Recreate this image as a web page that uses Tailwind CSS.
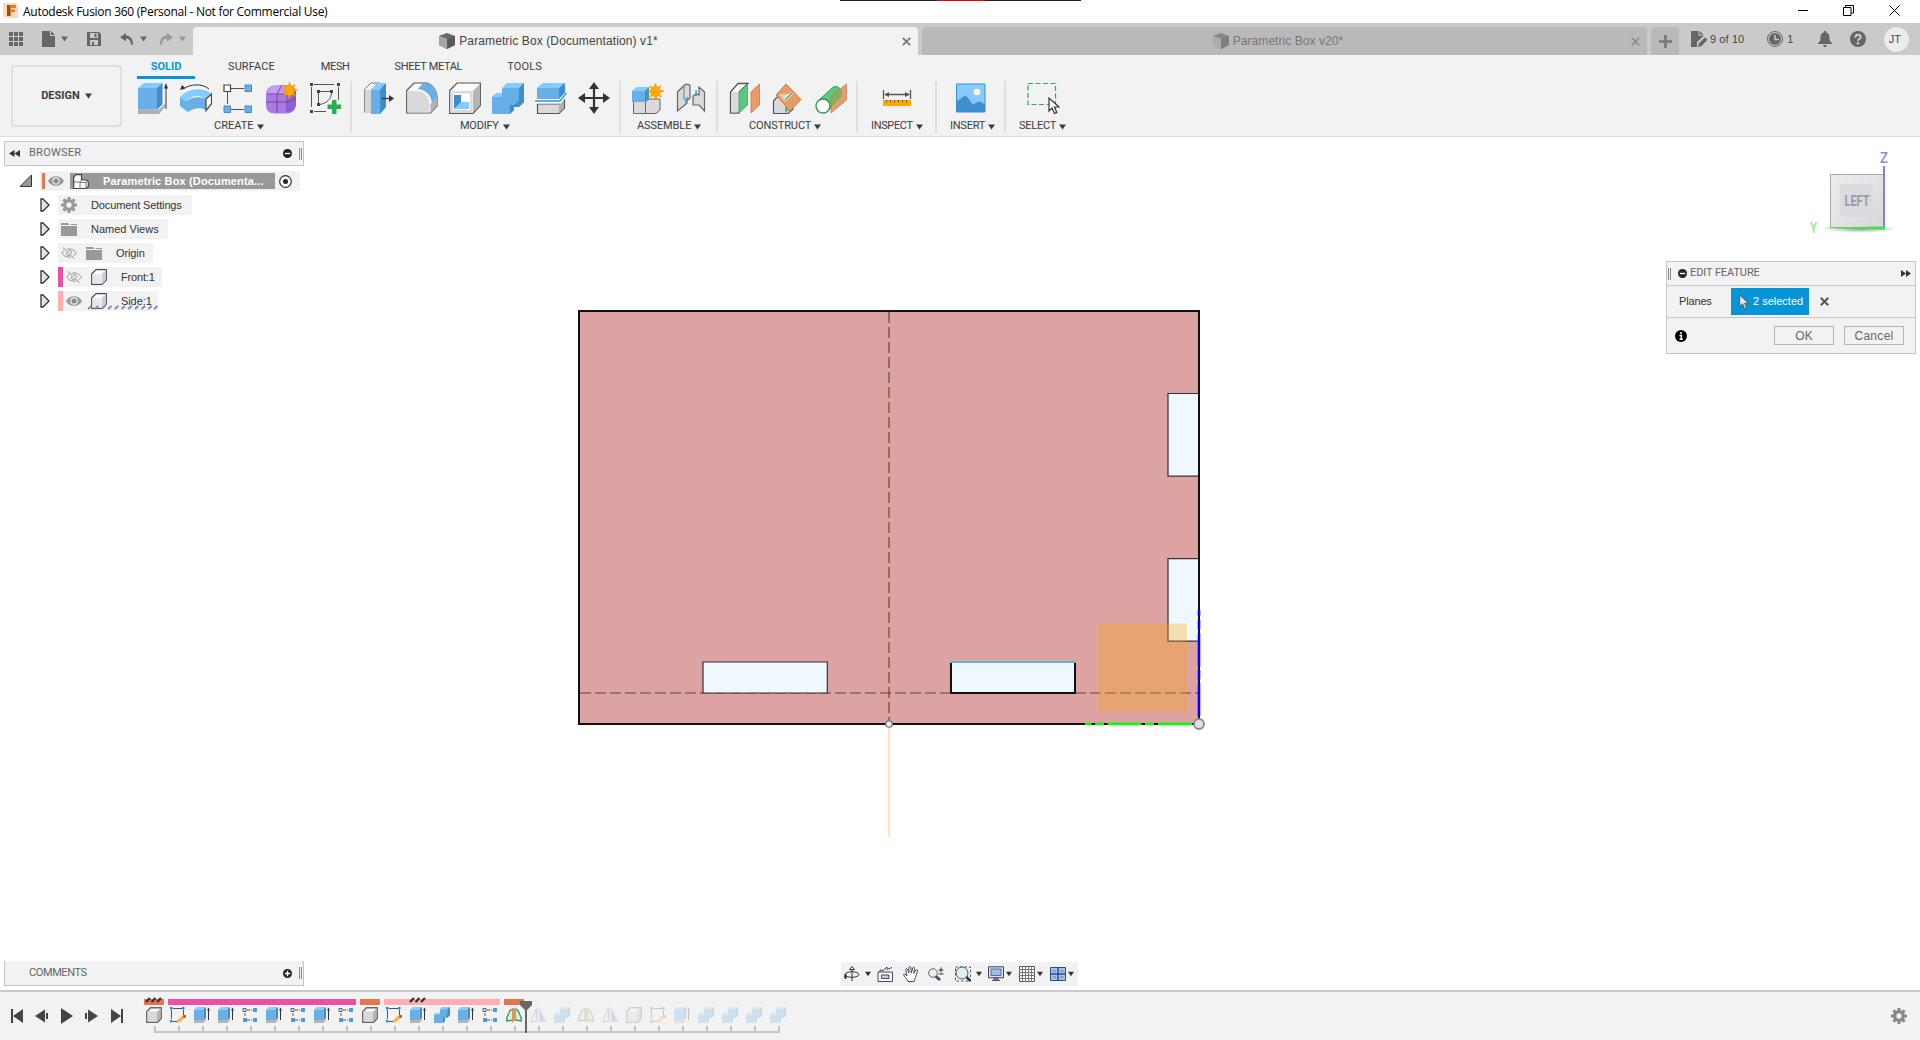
<!DOCTYPE html>
<html lang="en">
<head>
<meta charset="utf-8">
<title>Autodesk Fusion 360 (Personal - Not for Commercial Use)</title>
<script src="https://cdn.jsdelivr.net/npm/@tailwindcss/browser@4"></script>
</head>
<body class="w-[1920px] h-[1040px] overflow-hidden bg-white font-['Liberation_Sans',sans-serif] text-[#3c3c3c]">

<svg class="hidden">
  <defs>
    <symbol id="caret" viewBox="0 0 7 6"><path d="M0 .5h7L3.500 5.500z" fill="currentColor"/></symbol>
    <symbol id="cube" viewBox="0 0 16 16"><path d="M8 0 16 3v9l-8 4-8-4V3z" fill="#666"/><path d="M0 3l8 2.500V16l-8-4z" fill="#a5a5a5"/><path d="M8 5.500 16 3v9l-8 4z" fill="#5a5a5a"/></symbol>
    <symbol id="eye" viewBox="0 0 16 12"><path d="M0 6C3-.5 13-.5 16 6 13 12.500 3 12.500 0 6z" fill="#9a9a9a"/><circle cx="8" cy="6" r="3.700" fill="#f2f2f2"/><circle cx="8" cy="6" r="2.600" fill="#8c8c8c"/></symbol>
    <symbol id="eyeoff" viewBox="0 0 16 12"><path d="M.7 6C4 .5 12 .5 15.300 6 12 11.500 4 11.500.7 6z" fill="none" stroke="#999"/><circle cx="8" cy="6" r="2.700" fill="none" stroke="#999"/><path d="M2.500.5l11 11" stroke="#f2f2f2" stroke-width="2.500"/><path d="M2 .5l11.500 11.300" stroke="#888" stroke-width="1"/></symbol>
    <symbol id="folder" viewBox="0 0 16 13"><path d="M0 0h7l1.500 2H0zM9.500 1H16v1H10z" fill="#999"/><path d="M0 3h16v10H0z" fill="#999"/></symbol>
    <symbol id="body" viewBox="0 0 16 16"><path d="M.7 5 5 .7h10.300V11L11 15.300H.7z" fill="#fdfdfd" stroke="#444b55" stroke-width="1.200" stroke-linejoin="round"/><path d="M1.500 5.500h9v9h-9z" fill="#e4e6ea"/><path d="M11 5l4-4v10l-4 4z" fill="#c9ccd2"/></symbol>
    <symbol id="tri" viewBox="0 0 10 14"><path d="M1 1h2l6 6-6 6H1z" fill="#e4e4e4" stroke="#333" stroke-width="1.300"/></symbol>
    <symbol id="gear" viewBox="-8 -8 16 16"><circle r="4.300" fill="none" stroke="currentColor" stroke-width="3.200"/><g stroke="currentColor" stroke-width="3"><path d="M0-8v3M0 5v3M-8 0h3M5 0h3M-5.600-5.600l2 2M3.600 3.600l2 2M-5.600 5.600l2-2M3.600-3.600l2-2"/></g></symbol>
    <symbol id="t-ext" viewBox="0 0 16 16"><path d="M0 13h10l2-2v2l-2.500 3H0z" fill="#b5b5b5"/><path d="M0 2.500h9.500V13H0z" fill="#67afe6"/><path d="M0 2.500 3 0h9L9.500 2.500z" fill="#84cbff"/><path d="M9.500 2.500 12 0v10.500L9.500 13z" fill="#3d8ecb"/><path d="M14.500 2v11" stroke="#333"/><path d="M13 3.500 14.500.5 16 3.500z" fill="#333"/></symbol>
    <symbol id="t-sk" viewBox="0 0 16 16"><path d="M3 1.500h9M1.500 3v9M13.500 3v5M3 14.500h5" stroke="#555" stroke-width="1"/><path d="M0 0h2.500v2.500H0zM12 0h2.500v2.500H12zM0 13h2.500v2.500H0z" fill="#1e88e5"/><path d="M7.500 13l5-4.500 2.500 2-5 4.500-3 .8z" fill="#fbb731"/><circle cx="14.500" cy="9.300" r="1.600" fill="#f0423c"/></symbol>
    <symbol id="t-pat" viewBox="0 0 16 16"><path d="M5 3h5M3 6v4M5 13h5" stroke="#555" stroke-dasharray="3 1"/><path d="M1 1.500h3v3H1z" fill="#fff" stroke="#555"/><path d="M11 1h4v4h-4zM1 11h4v4H1zM11 11h4v4h-4z" fill="#4f9bd6"/></symbol>
    <symbol id="t-box" viewBox="0 0 16 16"><path d="M.8 4.500 4.500.8h10.700v10.700l-3.700 3.700H.8z" fill="#fafafa" stroke="#666" stroke-width="1.500" stroke-linejoin="round"/><path d="M1.500 4.500H11v10H1.500z" fill="#d9d9d9"/><path d="M11 4.500l3.500-3v9.700L11 14.500z" fill="#b5b5b5"/></symbol>
    <symbol id="t-com" viewBox="0 0 16 16"><path d="M0 8l2-2h4V2.500L8 0h8v8l-2.500 2.500H11V14l-2 2H0z" fill="#67afe6"/><path d="M6 2.500 8 0h8l-2.500 2.500zM0 8l2-2h4v2z" fill="#84cbff"/><path d="M13.500 2.500 16 0v8l-2.500 2.500H11V14l-2 2v-5.500h2L13.500 8z" fill="#3d8ecb"/></symbol>
    <symbol id="t-pl" viewBox="0 0 16 16"><path d="M.8 11 4 3.500 7 2v11l-6.200 1zM15.200 11 12 3.500 9.500 2v11l5.700 1z" fill="#dff1e4" stroke="#2f9a55" stroke-width="1.300"/><path d="M6 3.500 10 0v12.500L6 16z" fill="#e8925c"/></symbol>
    <symbol id="t-mir" viewBox="0 0 16 16"><path d="M6.300 1.500v13H.8z" fill="#fff" stroke="#777"/><path d="M8 0v16" stroke="#e8925c" stroke-dasharray="2 1"/><path d="M9.500 1v14h6.300z" fill="#4f9bd6"/></symbol>
    <symbol id="star" viewBox="-9 -9 18 18"><path d="M0-9 1.800-4 6-6.500 4-2 9-0.500 4.200 1.500 6.500 6 2 4.200 0 9-1.800 4.200-6.500 6.500-4.200 1.800-9 0-4.200-1.800-6.300-6-2-4.200z" fill="#ffa800" stroke="#d98500" stroke-width=".4"/></symbol>
  </defs>
</svg>

<!-- Title bar -->
<header class="relative flex h-[23px] items-center bg-white pl-[3px] pr-[20px]">
  <svg class="-mt-0.5 size-[15px]" viewBox="0 0 15 15"><path d="M0 0h13l2 2v13H2l-2-2z" fill="#fbd9bd"/><path d="M4 2h9v3H8v1.500h4v2.500H8v4H4z" fill="#e07b2c"/><path d="M4 2h3v11H4z" fill="#a8481a"/></svg>
  <h1 class="ml-[5px] font-['Open_Sans',sans-serif] text-[12px] tracking-[-0.28px] whitespace-nowrap text-black">Autodesk Fusion 360 (Personal - Not for Commercial Use)</h1>
  <div class="absolute left-[840px] top-0 flex h-px w-[241px] justify-center bg-[#222]"><i class="h-px w-12 bg-red-600"></i></div>
  <div class="-mt-[3px] ml-auto flex items-center gap-[35px] text-black">
    <svg class="h-[11px] w-[10px]" viewBox="0 0 10 11"><path d="M0 5.500h10" stroke="currentColor"/></svg>
    <svg class="size-[11px]" viewBox="0 0 11 11" fill="none" stroke="currentColor"><path d="M.5 2.500h7.500v8H.5zM2.500 2V.5h8v7.500H8.500"/></svg>
    <svg class="size-[11px]" viewBox="0 0 11 11" stroke="currentColor"><path d="M.5.5l10 10M10.500.5l-10 10"/></svg>
  </div>
</header>

<!-- Document tabs -->
<nav class="flex h-8 items-end bg-[#cacaca] text-[#666]">
  <div class="flex h-8 w-[193px] items-center pl-[9px]">
    <svg class="size-[14px]" viewBox="0 0 14 14" fill="currentColor"><path d="M0 0h4v4H0zM5 0h4v4H5zM10 0h4v4h-4zM0 5h4v4H0zM5 5h4v4H5zM10 5h4v4h-4zM0 10h4v4H0zM5 10h4v4H5zM10 10h4v4h-4z"/></svg>
    <svg class="ml-[19px] h-4 w-[13px]" viewBox="0 0 13 16" fill="currentColor"><path d="M0 0h8v5h5v11H0zM9 0l4 4H9z"/></svg>
    <svg class="ml-1.5 h-1.5 w-[7px]"><use href="#caret"/></svg>
    <svg class="ml-[19px] size-[14px]" viewBox="0 0 14 14"><path d="M0 0h12l2 2v12H0z" fill="currentColor"/><path d="M3 1h8v5H3zM3 8h8v5H3z" fill="#cacaca"/><path d="M7.500 1.500h2V5h-2zM5 10h2v3H5z" fill="currentColor"/></svg>
    <svg class="ml-[19px] h-3 w-[13px]" viewBox="0 0 13 12"><path d="M6 0v2.500c4.500 0 7 3.500 7 9h-2.200c0-4-1.500-5.800-4.800-6V8.500L0 4.300z" fill="currentColor"/></svg>
    <svg class="ml-[7px] h-1.5 w-[7px]"><use href="#caret"/></svg>
    <svg class="ml-[13px] h-3 w-[13px] text-[#999]" viewBox="0 0 13 12"><path d="M7 0v2.500c-4.500 0-7 3.500-7 9h2.200c0-4 1.500-5.800 4.800-6V8.500l6-4.200z" fill="currentColor"/></svg>
    <svg class="ml-[6px] h-1.5 w-[7px] text-[#999]"><use href="#caret"/></svg>
  </div>
  <div class="relative flex h-7 w-[725px] shrink-0 items-center justify-center rounded-t bg-[#f2f2f2] text-[12px] text-[#444]">
    <svg class="mr-1 size-4"><use href="#cube"/></svg><span class="mr-[14px] whitespace-nowrap tracking-[0.11px]">Parametric Box (Documentation) v1*</span>
    <svg class="absolute right-[7px] size-[9px]" viewBox="0 0 9 9"><path d="M.8.8l7.400 7.400M8.200.8.8 8.200" stroke="#777" stroke-width="1.700"/></svg>
  </div>
  <div class="relative ml-1 flex h-7 w-[725px] shrink-0 items-center justify-center rounded-t bg-[#b9b9b9] text-[12px] text-[#777]">
    <svg class="mr-1 size-4 opacity-60"><use href="#cube"/></svg><span class="mr-[13px] whitespace-nowrap tracking-[0.06px]">Parametric Box v20*</span>
    <svg class="absolute right-[7px] size-[9px]" viewBox="0 0 9 9"><path d="M.8.8l7.400 7.400M8.200.8.8 8.200" stroke="#888" stroke-width="1.500"/></svg>
  </div>
  <div class="ml-1 flex h-7 w-7 items-center justify-center rounded-t bg-[#b9b9b9]"><svg class="size-[13px]" viewBox="0 0 13 13"><path d="M0 6.500h13M6.500 0v13" stroke="#777" stroke-width="2.600"/></svg></div>
  <div class="flex h-8 flex-1 items-center pl-3 text-[11px] text-[#444]">
    <svg class="h-4 w-[17px]" viewBox="0 0 17 16"><path d="M0 0h7.500v4.500h5V5L6 11v5H0zM8.500 0l4 3.500h-4z" fill="#666"/><path d="M7 16l.8-3.500L14 6.500l2.500 2.300-6.200 6.400z" fill="#666"/></svg>
    <span class="ml-[2px] whitespace-nowrap tracking-[0.1px]">9 of 10</span>
    <svg class="ml-[23px] size-4" viewBox="0 0 16 16"><circle cx="8" cy="8" r="7.500" fill="none" stroke="#666"/><circle cx="8" cy="8" r="6" fill="#666"/><path d="M8 4v4.500h4" fill="none" stroke="#cacaca" stroke-width="1.500"/></svg>
    <span class="ml-1">1</span>
    <svg class="ml-[25px] h-4 w-[14px]" viewBox="0 0 14 16"><path d="M6 0h2v1.500c3 .7 3.500 3 3.500 6 0 2.500 1 3.500 2.500 4.500v1H0v-1c1.500-1 2.500-2 2.500-4.500 0-3 .5-5.300 3.500-6zM5 14h4l-1 2H6z" fill="#666"/></svg>
    <svg class="ml-[18px] size-4" viewBox="0 0 16 16"><circle cx="8" cy="8" r="8" fill="#666"/><path d="M5.300 6.500C5.300 2.800 10.700 3 10.700 6 10.700 8 8 8 8 10" fill="none" stroke="#cacaca" stroke-width="2"/><circle cx="8" cy="12.300" r="1.200" fill="#cacaca"/></svg>
    <div class="ml-[18px] flex size-[25px] items-center justify-center rounded-full bg-[#ececec] pr-1 text-[11px] text-[#446]">JT</div>
  </div>
</nav>

<!-- Ribbon -->
<section class="flex h-[82px] border-b border-[#dcdcdc] bg-[#f2f2f2] font-['Roboto',sans-serif] text-[11px] text-[#3c3c3c]">
  <div class="ml-[11px] mt-[10px] flex h-[62px] w-[111px] items-center justify-center gap-[5px] rounded border-2 border-[#e0e0e0] font-bold">DESIGN<svg class="h-1.5 w-[7px]"><use href="#caret"/></svg></div>
  <div class="ml-[15px] flex flex-col">
    <div class="flex h-6 items-center">
      <div class="flex h-6 w-[58px] items-center justify-center border-b-[3px] border-[#0696d7] pt-[3px] font-bold text-[#0696d7]">SOLID</div>
      <span class="ml-[33px] tracking-[0.1px]">SURFACE</span><span class="ml-[46px] tracking-[-0.38px]">MESH</span><span class="ml-[45px] tracking-[-0.33px]">SHEET METAL</span><span class="ml-[45px] tracking-[0.15px]">TOOLS</span>
    </div>
    <div class="flex h-[54px] pt-[2px]">
      <!-- Create -->
      <div class="flex w-[215px] flex-col border-r-2 border-[#dedede]">
        <div class="flex h-[34px] items-center gap-[11px]">
          <svg class="size-8" viewBox="0 0 32 32"><path d="M1 27.500h21l6-6V25l-6 7H1z" fill="#b0b0b0"/><path d="M1 6h19v21.500H1z" fill="#67afe6"/><path d="M1 6l6-5h18.500L20 6z" fill="#84cbff"/><path d="M20 6l5.500-5v21.500l-5.500 5z" fill="#3d8ecb"/><path d="M29 5v22" stroke="#333"/><path d="M27 6.500 29 1l2 5.500z" fill="#333"/></svg>
          <svg class="size-8" viewBox="0 0 32 32"><path d="M0 15C8 6 22 5 31 11l-5 6C20 12 10 13 6 20z" fill="#84cbff"/><path d="M0 15l6 4.500C11 15 20 14 26 17v11c-6-3-13-2-18 2l-8-6z" fill="#67afe6"/><path d="M26 17l5.500-5v10L26 28.500z" fill="#fff" stroke="#444" stroke-width="1.200"/><path d="M3 7C10 2 22 1 29 7" fill="none" stroke="#333"/><path d="M0 8l2-5 3.500 3.500z" fill="#333"/></svg>
          <svg class="size-8" viewBox="0 0 32 32"><path d="M8 6.500h13M4.500 10v12M8 27.500h13" stroke="#555" fill="none"/><path d="M1 3h6.500v6.500H1z" fill="#fff" stroke="#444" stroke-width="1.200"/><path d="M22 3h6.500v6.500H22zM1 24h6.500v6.500H1zM22 24h6.500v6.500H22z" fill="#67afe6" stroke="#3d8ecb"/></svg>
          <svg class="size-8" viewBox="0 0 32 32"><path d="M0 13C0 6 5 3 12 3h9c6 0 9 3 9 9v10c0 6-4 9.500-10 9.500H9c-6 0-9-3-9-9z" fill="#a77be0"/><path d="M1 12C2 5 7 3 12 3h9c5 0 7 2 8 5-3 4-6 4-10 4z" fill="#c79bff"/><path d="M22 12l8-5v15c-1 5-4 8-9 9 2-5 1-12 1-19z" fill="#8e5fcc"/><path d="M0 20h22l8-4M11 31V12l5-9M1 12h20v18" fill="none" stroke="#6d3fa8" stroke-width=".9"/><use href="#star" x="15" y="0" width="17" height="17"/></svg>
          <svg class="size-8" viewBox="0 0 32 32"><path d="M5 2.500h20M2.500 5v20M5 29.500h12M29.500 5v13" stroke="#555" fill="none"/><path d="M1 1h3v3H1zM28 1h3v3h-3zM1 28h3v3H1zM8 8h3v3H8zM21 8h3v3h-3zM8 21h3v3H8z" fill="#444"/><path d="M11 9.500h10M9.500 11v10M22.500 11C22 17 18 21 11 22.500" fill="none" stroke="#555"/><path d="M23 18h4.500v4.500H32V27h-4.500v5H23v-5h-4.500v-4.500H23z" fill="#27b04b"/></svg>
        </div>
        <div class="mt-[5px] flex h-[13px] items-center gap-[3px] pl-[77px]">CREATE<svg class="h-1.5 w-[7px]"><use href="#caret"/></svg></div>
      </div>
      <!-- Modify -->
      <div class="flex w-[269px] flex-col border-r-2 border-[#dedede]">
        <div class="flex h-[34px] items-center gap-[11px] pl-[11px]">
          <svg class="size-8" viewBox="0 0 32 32"><path d="M1.700 7 8 1h9v29.500H1.700z" fill="#f5f5f5" stroke="#777"/><path d="M2 8h6v23H2z" fill="#d5d5d5"/><path d="M8 8l6-7h9v24l-6 7H8z" fill="#67afe6"/><path d="M8 8l6-7h9l-6 7z" fill="#84cbff"/><path d="M17 8l6-7v24l-6 7z" fill="#3d8ecb"/><path d="M19 16.500h8" stroke="#333" stroke-width="1.300"/><path d="M26 13l5 3.500-5 3.500z" fill="#333"/></svg>
          <svg class="size-8" viewBox="0 0 32 32"><path d="M.7 8.500 8 1h13c6 2 10 8 10 15v8l-6.500 7H.7z" fill="#f7f7f7" stroke="#555" stroke-width="1.200"/><path d="M1.500 9h8c9 0 14 6 14 14v7.500h-22z" fill="#dadada"/><path d="M24.500 22 31 16v8l-6.500 7z" fill="#b0b0b0"/><path d="M12 7l5-6c9 0 14.500 6 14.500 14L26 21C25 13 20 8 12 7z" fill="#67afe6"/></svg>
          <svg class="size-8" viewBox="0 0 32 32"><path d="M.7 8.500 8 1h23.300v22.500L24 31.300H.7z" fill="#fbfbfb" stroke="#555" stroke-width="1.200"/><path d="M1.500 9H23.500v21.700h-22z" fill="#dadada"/><path d="M24 9l7-7v21l-7 7.500z" fill="#b5b5b5"/><path d="M4 11.500h17V28H4z" fill="#fff"/><path d="M5 13h7v9l-7 5z" fill="#3d8ecb"/><path d="M12 20h8v7H5z" fill="#84cbff"/></svg>
          <svg class="size-8" viewBox="0 0 32 32"><path d="M0 15l4-3.500h6V7l5-6h17v19l-5 5h-5v3l-4 4H0z" fill="#67afe6"/><path d="M10 6l5-5h17l-5 5zM0 15l4-3.500h6V15z" fill="#84cbff"/><path d="M27 6l5-5v19l-5 5h-5v3l-4 4v-9h4l5-4z" fill="#3d8ecb"/></svg>
          <svg class="size-8" viewBox="0 0 32 32"><path d="M2 6l6-5h22l-6 5v11H2z" fill="#67afe6"/><path d="M2 6l6-5h22l-6 5z" fill="#84cbff"/><path d="M24 6l6-5v10l-6 6z" fill="#3d8ecb"/><path d="M2.500 22H24l5.500-5v9L24 31.500H2.500z" fill="#dadada" stroke="#555" stroke-width="1.200"/><path d="M24 22l5-4v8l-5 5z" fill="#b0b0b0"/><path d="M0 19.500h25l6.500-7.500" stroke="#fff" stroke-width="4" fill="none"/><path d="M0 19h25l6.500-8" stroke="#2196e8" stroke-width="1.300" fill="none"/></svg>
          <svg class="size-8" viewBox="0 0 32 32"><path d="M16 5v22M5 16h22" stroke="#333" stroke-width="2.200"/><path d="M16 0l5 7H11zM16 32l5-7H11zM0 16l7-5v10zM32 16l-7-5v10z" fill="#333"/></svg>
        </div>
        <div class="mt-[5px] flex h-[13px] items-center gap-[4px] pl-[108px]"><span class="tracking-[-0.23px]">MODIFY</span><svg class="h-1.5 w-[7px]"><use href="#caret"/></svg></div>
      </div>
      <!-- Assemble -->
      <div class="flex w-[97px] flex-col border-r-2 border-[#dedede]">
        <div class="flex h-[34px] items-center gap-[11px] pl-[11px]">
          <svg class="size-8" viewBox="0 0 32 32"><path d="M1 20h26V31H1z" fill="#dadada"/><path d="M13 20l4-3h11v11l-4 3.500H13.500z" fill="#dadada" stroke="#666"/><path d="M1.500 20v11.500h12V20" fill="#dadada" stroke="#666"/><path d="M0 9l5-4h12v11l-4 4H0z" fill="#67afe6"/><path d="M0 9l5-4h12l-4 4z" fill="#84cbff"/><path d="M13 9l4-4v11l-4 4z" fill="#3d8ecb"/><use href="#star" x="15" y="1" width="17" height="17"/></svg>
          <svg class="size-8" viewBox="0 0 32 32"><path d="M2.500 10 9 3.500C10 2 14 2 15 3.500V16l-4 2v4l-8.500 7zM29.500 10 24 5v8l-3-1-3 2v9h6l5.500 6z" fill="#d9d9d9" stroke="#666" stroke-width="1.200"/><path d="M9 4v13c2 1.500 4 1 6 0" fill="none" stroke="#777"/><path d="M12 15v7M21 8v6" stroke="#2196e8" stroke-width="1.300"/></svg>
        </div>
        <div class="mt-[5px] flex h-[13px] items-center gap-[3px] pl-[16px]"><span class="tracking-[-0.1px]">ASSEMBLE</span><svg class="h-1.5 w-[7px]"><use href="#caret"/></svg></div>
      </div>
      <!-- Construct -->
      <div class="flex w-[140px] flex-col border-r-2 border-[#dedede]">
        <div class="flex h-[34px] items-center gap-[11px] pl-[11px]">
          <svg class="size-8" viewBox="0 0 32 32"><path d="M1.500 10 9 1.500h10L10 10v21H1.500z" fill="#fff" stroke="#555" stroke-width="1.300"/><path d="M2 10h8v20.500H2z" fill="#dadada"/><path d="M10 10l8.500-8v21L10 31z" fill="#5ac880" stroke="#2f9a55" stroke-width=".7"/><path d="M22 10l8.500-8v21L22 31z" fill="#e89b68" stroke="#c87840" stroke-width=".8"/></svg>
          <svg class="size-8" viewBox="0 0 32 32"><path d="M1.500 19 5 15h16v12l-5 4.500H1.500z" fill="#dadada" stroke="#555" stroke-width="1.200"/><path d="M13 31V20l8-4v9z" fill="#4dc274"/><path d="M14 2l15 15.500L18 29 4 13z" fill="#e89b68" stroke="#d07f48"/><path d="M7 12h11l-5 8z" fill="#f3d1ba"/><path d="M13 18l7-7" stroke="#fff" stroke-width="3"/><path d="M13 18l7-7" stroke="#2fae5a" stroke-width="1.500"/></svg>
          <svg class="size-8" viewBox="0 0 32 32"><path d="M3 19 17 6c4-3 8-1 9 3s-1 7-3 8L13 29z" fill="#5ac880" stroke="#2f9a55"/><path d="M16 14 31.500 2v16L16 31z" fill="#e2905b" fill-opacity=".88" stroke="#c87840" stroke-width=".7"/><path d="M16.500 14l9-7c2 3 2 7-1 10l-8 7z" fill="#79b163" fill-opacity=".85"/><circle cx="8" cy="24" r="7" fill="#fff" stroke="#2f9a55" stroke-width="1.400"/></svg>
        </div>
        <div class="mt-[5px] flex h-[13px] items-center gap-[3px] pl-[31px]"><span class="tracking-[-0.1px]">CONSTRUCT</span><svg class="h-1.5 w-[7px]"><use href="#caret"/></svg></div>
      </div>
      <!-- Inspect -->
      <div class="flex w-[79px] flex-col border-r-2 border-[#dedede]">
        <div class="flex h-[34px] items-center pl-[23px]">
          <svg class="size-8" viewBox="0 0 32 32"><path d="M2.500 8v9M29.500 8v9M5 12.500h22" stroke="#555" stroke-width="1.300"/><path d="M3 12.500l5-2.500v5zM29 12.500l-5-2.500v5z" fill="#555"/><path d="M2 18h28v6H2z" fill="#ffa800"/><path d="M5.500 18v2.500M9.500 18v2.500M13.500 18v2.500M17.500 18v2.500M21.500 18v2.500M25.500 18v2.500" stroke="#7a5200"/></svg>
        </div>
        <div class="mt-[5px] flex h-[13px] items-center gap-[3px] pl-[13px]"><span class="tracking-[-0.35px]">INSPECT</span><svg class="h-1.5 w-[7px]"><use href="#caret"/></svg></div>
      </div>
      <!-- Insert -->
      <div class="flex w-[69px] flex-col border-r-2 border-[#dedede]">
        <div class="flex h-[34px] items-center pl-[18px]">
          <svg class="size-8" viewBox="0 0 32 32"><path d="M1.500 2h28.500v28H1.500z" fill="#84cbff" stroke="#3d8ecb"/><circle cx="22" cy="10" r="3.300" fill="#fff7c8"/><path d="M1.500 19c4-1 6-5 8.500-5s5 5 8 8.500c3-1 4-3 6-3s3 2 6 2.500v8H1.500z" fill="#3d8ecb"/></svg>
        </div>
        <div class="mt-[5px] flex h-[13px] items-center gap-[3px] pl-[13px]"><span class="tracking-[-0.24px]">INSERT</span><svg class="h-1.5 w-[7px]"><use href="#caret"/></svg></div>
      </div>
      <!-- Select -->
      <div class="flex w-[80px] flex-col">
        <div class="flex h-[34px] items-center pl-[20px]">
          <svg class="h-8 w-[34px]" viewBox="0 0 34 32"><path d="M2 1.500h27.500v21H2z" fill="none" stroke="#27b04b" stroke-dasharray="5 2.500" stroke-width="1.200"/><path d="M23 16v13l3-3 2.500 5.500 2.300-1L28.500 25H33z" fill="#fff" stroke="#333" stroke-width="1.200"/></svg>
        </div>
        <div class="mt-[5px] flex h-[13px] items-center gap-[3px] pl-[13px]"><span class="tracking-[-0.24px]">SELECT</span><svg class="h-1.5 w-[7px]"><use href="#caret"/></svg></div>
      </div>
    </div>
  </div>
</section>

<!-- Canvas -->
<main class="relative h-[853px] bg-white">
  <svg class="absolute left-[560px] top-[163px] h-[560px] w-[660px]" viewBox="560 300 660 560">
    <path d="M579 311H1199V724H579z" fill="#dda2a2" stroke="#111" stroke-width="2"/>
    <path d="M889 376V837" stroke="#ffb03a" stroke-opacity=".45" stroke-width="1.500"/>
    <path d="M889 312V724" stroke="#4a2f2f" stroke-opacity=".65" stroke-width="1.500" stroke-dasharray="11 4"/>
    <path d="M580 693H1198" stroke="#3a2222" stroke-opacity=".75" stroke-width="1.200" stroke-dasharray="11 4"/>
    <g fill="#f0f8ff" stroke="#333" stroke-width="1.200">
      <path d="M1198 393.500H1168V476.200H1198M1198 558.700H1168V641.200H1198M703 662H827.300V693H703z"/>
      <path d="M951 662H1075V693H951z" stroke="#111" stroke-width="2"/>
    </g>
    <path d="M950 662H1076" stroke="#5cb8dc" stroke-width="2"/>
    <path d="M1098 623.500h89V712h-89z" fill="#ffa500" fill-opacity=".3"/>
    <path d="M1199 312V724" stroke="#111" stroke-width="2"/>
    <path d="M1199 610v6M1199 620v9.500M1199 633v34M1199 670v9.500M1199 683v33" stroke="#00f" stroke-width="2.600"/>
    <path d="M1085 724h6.500M1095 724h9M1107.500 724h34M1145 724h9M1158 724h34" stroke="#0f0" stroke-width="2.400"/>
    <circle cx="1199" cy="724" r="5" fill="#e0dce4" stroke="#8c8a8c" stroke-width="1.800"/>
    <circle cx="889" cy="724" r="3.200" fill="#eee" stroke="#777" stroke-width="1.300"/>
  </svg>

  <!-- Browser panel -->
  <aside class="absolute left-1 top-[4px] w-[300px] text-[11px] text-[#333]">
    <div class="flex h-[25px] items-center border border-[#c4c4c4] bg-[#f2f2f2] pl-[4px] pr-[1px]">
      <svg class="h-[7px] w-[11px]" viewBox="0 0 11 7"><path d="M5.500 0v7L0 3.500zM11 0v7L5.500 3.500z" fill="#333"/></svg>
      <span class="ml-[9px] font-['Roboto',sans-serif] tracking-[0.25px] text-[#666]">BROWSER</span>
      <svg class="ml-auto size-[9px]" viewBox="0 0 10 10"><circle cx="5" cy="5" r="5" fill="#222"/><path d="M2 5h6" stroke="#fff" stroke-width="1.500"/></svg>
      <i class="ml-[7px] h-3 w-[3px] border-x border-[#888]"></i>
    </div>
    <div class="mt-[5px] flex h-5 items-center">
      <svg class="ml-4 h-3 w-3" viewBox="0 0 12 12"><path d="M11.500 0v11.500H0z" fill="#999" stroke="#333"/></svg>
      <div class="ml-2 flex h-5 w-[260px] items-center bg-[#f2f2f2] pl-0.5">
        <i class="h-4 w-[3px] bg-[#e8744f]"></i>
        <svg class="ml-[3px] h-3 w-4"><use href="#eye"/></svg>
        <div class="ml-[6px] flex h-4 w-[205px] items-center bg-[#999] pl-[3px] text-[11.500px] font-bold text-white">
          <svg class="h-[15px] w-4 shrink-0" viewBox="0 0 16 15"><path d="M.7 3 3 .7h5.500V6h5L15.300 8v4.500L13 14.500H.7z" fill="#fff" stroke="#444" stroke-width="1.200"/><path d="M1 8h6v6M7 8l2-2M13 8.500v6M7 8.500h6l2-1.500" fill="none" stroke="#777"/></svg>
          <span class="ml-[14px] whitespace-nowrap text-[11px] tracking-[0.15px]">Parametric Box (Documenta...</span>
        </div>
        <svg class="ml-1 size-[13px]" viewBox="0 0 13 13"><circle cx="6.500" cy="6.500" r="5.800" fill="#fff" stroke="#333" stroke-width="1.200"/><circle cx="6.500" cy="6.500" r="2.500" fill="#222"/></svg>
      </div>
    </div>
    <div class="mt-1 flex h-5 items-center pl-9"><svg class="h-[14px] w-[10px]"><use href="#tri"/></svg>
      <div class="ml-2 flex h-5 w-[134px] items-center bg-[#f2f2f2] pl-[3px]"><svg class="size-4 text-[#999]"><use href="#gear"/></svg><span class="ml-[14px] whitespace-nowrap tracking-[-0.13px]">Document Settings</span></div></div>
    <div class="mt-1 flex h-5 items-center pl-9"><svg class="h-[14px] w-[10px]"><use href="#tri"/></svg>
      <div class="ml-2 flex h-5 w-[110px] items-center bg-[#f2f2f2] pl-[3px]"><svg class="h-[13px] w-4"><use href="#folder"/></svg><span class="ml-[14px] whitespace-nowrap">Named Views</span></div></div>
    <div class="mt-1 flex h-5 items-center pl-9"><svg class="h-[14px] w-[10px]"><use href="#tri"/></svg>
      <div class="ml-2 flex h-5 w-[95px] items-center bg-[#f2f2f2] pl-[3px]"><svg class="h-3 w-4"><use href="#eyeoff"/></svg><svg class="ml-[9px] h-[13px] w-4"><use href="#folder"/></svg><span class="ml-[14px] tracking-[-0.11px]">Origin</span></div></div>
    <div class="mt-1 flex h-5 items-center pl-9"><svg class="h-[14px] w-[10px]"><use href="#tri"/></svg>
      <div class="ml-2 flex h-5 w-[104px] items-center bg-[#f2f2f2]"><i class="h-5 w-[5px] bg-[#ec4fa6]"></i><svg class="ml-[3px] h-3 w-4"><use href="#eyeoff"/></svg><svg class="ml-[9px] size-4"><use href="#body"/></svg><span class="ml-[14px] tracking-[-0.17px]">Front:1</span></div></div>
    <div class="mt-1 flex h-5 items-center pl-9"><svg class="h-[14px] w-[10px]"><use href="#tri"/></svg>
      <div class="relative ml-2 flex h-5 w-[100px] items-center bg-[#f2f2f2]"><i class="h-5 w-[5px] bg-[#ffadb0]"></i><svg class="ml-[3px] h-3 w-4"><use href="#eye"/></svg><svg class="ml-[9px] size-4"><use href="#body"/></svg><span class="ml-[14px] tracking-[-0.08px]">Side:1</span>
        <svg class="absolute left-[29px] top-[14px] h-[5px] w-[72px]" viewBox="0 0 72 5"><path d="M1 4l3.500-3M7.700 4l3.500-3M14.400 4l3.500-3M21.100 4l3.500-3M27.800 4l3.500-3M34.500 4l3.500-3M41.200 4l3.500-3M47.900 4l3.500-3M54.600 4l3.500-3M61.300 4l3.500-3M67 4l3.500-3" stroke="#7c8db5" stroke-width="2"/></svg></div></div>
  </aside>

  <!-- View cube -->
  <svg class="absolute left-[1800px] top-[8px] h-[95px] w-[110px]" viewBox="1800 145 110 95" font-family="Roboto" font-weight="bold">
    <defs><linearGradient id="cg" x2="1" y2="1"><stop stop-color="#ededed"/><stop offset="1" stop-color="#d8d8da"/></linearGradient><radialGradient id="sh"><stop stop-color="#888" stop-opacity=".8"/><stop offset="1" stop-color="#999" stop-opacity="0"/></radialGradient></defs>
    <ellipse cx="1860" cy="229" rx="38" ry="4" fill="url(#sh)"/>
    <path d="M1830.500 174.500h53v53h-53z" fill="url(#cg)" stroke="#aaa"/>
    <path d="M1840 184h33v33h-33z" fill="#dadbdf"/>
    <text x="1844.500" y="205.500" font-size="14" textLength="25" lengthAdjust="spacingAndGlyphs" fill="#9a9aa2">LEFT</text>
    <path d="M1884 166v62" stroke="#7c7cf8" stroke-width="2"/><path d="M1821 228l64-1.700v3.400z" fill="#4ddc4d"/>
    <text x="1880" y="162.500" font-size="14" font-weight="500" fill="#8a8af5" textLength="8" lengthAdjust="spacingAndGlyphs">Z</text>
    <text x="1810" y="232.500" font-size="14" font-weight="500" fill="#85f285" textLength="7" lengthAdjust="spacingAndGlyphs">Y</text>
  </svg>

  <!-- Edit feature dialog -->
  <section class="absolute left-[1666px] top-[124px] w-[250px] border border-[#c6c6c6] bg-[#f2f2f2] text-[11px] text-[#333]">
    <div class="flex h-6 items-center border-b border-[#c6c6c6] pl-px pr-[4px]">
      <i class="h-3 w-[3px] border-r border-l border-[#888]"></i>
      <svg class="ml-[7px] size-[9px]" viewBox="0 0 10 10"><circle cx="5" cy="5" r="5" fill="#222"/><path d="M2 5h6" stroke="#fff" stroke-width="1.500"/></svg>
      <span class="ml-[3px] font-['Roboto',sans-serif] tracking-[-0.1px] text-[#666]">EDIT FEATURE</span>
      <svg class="ml-auto h-[7px] w-[10px]" viewBox="0 0 10 7"><path d="M0 0l5 3.500L0 7zM5 0l5 3.500L5 7z" fill="#333"/></svg>
    </div>
    <div class="flex h-8 items-center border-b border-[#c6c6c6] pl-[12px]">
      <span class="w-8 tracking-[-0.16px]">Planes</span>
      <div class="ml-[20px] flex h-[27px] w-[78px] items-center bg-[#0696d7] pl-[8px] text-white"><svg class="h-4 w-[10px] shrink-0" viewBox="0 0 10 16"><path d="M.7 1v11.500l2.800-2.700 2.200 5 2-.9-2.200-4.700h3.800z" fill="#e6e6e6" stroke="#555" stroke-width=".9"/></svg><span class="ml-1 whitespace-nowrap">2 selected</span></div>
      <svg class="ml-[11px] size-[9px]" viewBox="0 0 9 9"><path d="M.8.8l7.400 7.400M8.200.8.8 8.200" stroke="#555" stroke-width="2"/></svg>
    </div>
    <div class="flex h-[35px] items-center pl-[8px] text-[12px] text-[#666]">
      <svg class="size-3" viewBox="0 0 12 12"><circle cx="6" cy="6" r="6" fill="#000"/><path d="M6 2v2M4.500 5.500h1.800V9M4.500 9.300h3.300" stroke="#fff" stroke-width="1.500" fill="none"/></svg>
      <div class="ml-[87px] flex h-[19px] w-[60px] items-center justify-center border border-[#b5b5b5]">OK</div>
      <div class="ml-[10px] flex h-[19px] w-[60px] items-center justify-center border border-[#b5b5b5] tracking-[0.3px]">Cancel</div>
    </div>
  </section>

  <!-- Comments panel -->
  <div class="absolute left-1 top-[824px] flex h-[25px] w-[300px] items-center border border-t-0 border-[#c4c4c4] bg-[#f2f2f2] pl-[24px] pr-[1px] font-['Roboto',sans-serif] text-[11px] text-[#666]">
    <span class="tracking-[-0.4px]">COMMENTS</span>
    <svg class="ml-auto size-[9px]" viewBox="0 0 10 10"><circle cx="5" cy="5" r="5" fill="#222"/><path d="M2 5h6M5 2v6" stroke="#fff" stroke-width="1.500"/></svg>
    <i class="ml-[7px] h-3 w-[3px] border-x border-[#888]"></i>
  </div>

  <!-- Navigation bar -->
  <div class="absolute left-[841px] top-[825px] flex h-6 w-[237px] items-center bg-[#f2f2f2] pl-[3px] text-[#333]">
    <svg class="size-4" viewBox="0 0 16 16" fill="none" stroke="#333"><ellipse cx="8" cy="8.500" rx="7" ry="2.800"/><path d="M8 1v14"/><path d="M5.500 3.500 8 .5l2.500 3z" fill="#fff"/><path d="M2 8v5l-2-2.500z" fill="#333"/></svg>
    <svg class="ml-[5px] h-1.5 w-[6px]"><use href="#caret"/></svg>
    <svg class="ml-[6px] size-4" viewBox="0 0 16 16" fill="none" stroke="#444b5a"><path d="M1 6h14.500v9.500H1z" fill="#fafafa"/><path d="M4.500 9h7.500v3.500H4.500z" fill="#ccd"/><path d="M3 6V4l3 .5L10 1v2.500l5-2"/></svg>
    <svg class="ml-[10px] size-4" viewBox="0 0 16 16"><path d="M5 15.500C4 13 1 10 .5 8.500c1-1 2.500 0 3.500 1.500L2.800 3.500c0-1 1.500-1.200 1.800 0L6 7 5.800 1.500c0-1.200 1.800-1.200 2 0L8.300 7 9.800 1.800c.3-1 1.900-.8 1.700.5L10.800 7.500l2.200-3.500c.7-.8 2 0 1.600 1C14 7.500 13 9 12.500 11.500L11 15.500z" fill="#fff" stroke="#444b5a"/></svg>
    <svg class="ml-[9px] size-4" viewBox="0 0 16 16"><path d="M7.500 10l4.500 4" stroke="#444b5a" stroke-width="3"/><circle cx="5" cy="7" r="4.300" fill="#e3f2f5" stroke="#667"/><path d="M10.500 4h5M13 1.500v5M10.500 8h5" stroke="#333"/></svg>
    <svg class="ml-[11px] size-4" viewBox="0 0 16 16"><path d="M.5 1h15v14H.5z" fill="none" stroke="#555" stroke-dasharray="2.500 2"/><path d="M11 10.500l4.500 4.500" stroke="#333" stroke-width="2.500"/><circle cx="7" cy="7" r="6" fill="#dcefef" stroke="#556"/></svg>
    <svg class="ml-[5px] h-1.5 w-[6px]"><use href="#caret"/></svg>
    <svg class="ml-[6px] size-4" viewBox="0 0 16 16"><path d="M.5.8h15v11H.5z" fill="#dde" stroke="#445"/><path d="M3 3h10v6.500H3z" fill="#9cc0ea" stroke="#4a6fa8"/><path d="M6 12h4v2H6zM4 14.500h8" fill="#99a" stroke="#556"/></svg>
    <svg class="ml-[2px] h-1.5 w-[6px]"><use href="#caret"/></svg>
    <svg class="ml-[7px] size-4" viewBox="0 0 16 16"><path d="M.5.5h15v15H.5z" fill="#fff" stroke="#555"/><path d="M3.500 0v16M6.500 0v16M9.500 0v16M12.500 0v16M0 3.500h16M0 6.500h16M0 9.500h16M0 12.500h16" stroke="#777"/></svg>
    <svg class="ml-[2px] h-1.5 w-[6px]"><use href="#caret"/></svg>
    <svg class="ml-[7px] size-4" viewBox="0 0 16 16"><path d="M.5 1.500h15v13H.5z" fill="#a9c6ec" stroke="#2f4a7c"/><path d="M8 1.500v13M0 8h16" stroke="#2f4a7c" stroke-width="1.500"/><path d="M3 4h2.500v1.500H3zM10.500 4H13v1.500h-2.500zM3 10.500h2.500V12H3zM10.500 10.500H13V12h-2.500z" fill="#dce8fa" stroke="#5b7db5" stroke-width=".7"/></svg>
    <svg class="ml-[2px] h-1.5 w-[6px]"><use href="#caret"/></svg>
  </div>
</main>

<!-- Timeline -->
<footer class="flex h-[50px] border-t-2 border-[#cacaca] bg-[#f2f2f2]">
  <div class="flex h-[48px] w-[144px] items-center pl-[11px]">
    <svg class="h-[14px] w-3" viewBox="0 0 12 14" fill="#444"><path d="M0 0h2v14H0zM12 0v14L2 7z"/></svg>
    <svg class="ml-3 h-[14px] w-[13px]" viewBox="0 0 13 14" fill="#444"><path d="M10 .5v13L0 7zM11 4h2v6h-2z"/></svg>
    <svg class="ml-[13px] h-4 w-3" viewBox="0 0 12 16" fill="#444"><path d="M0 0l12 8L0 16z"/></svg>
    <svg class="ml-3 h-[14px] w-[13px]" viewBox="0 0 13 14" fill="#444"><path d="M3 .5v13L13 7zM0 4h2v6H0z"/></svg>
    <svg class="ml-[13px] h-[14px] w-3" viewBox="0 0 12 14" fill="#444"><path d="M10 0h2v14h-2zM0 0v14l10-7z"/></svg>
  </div>
  <div class="relative w-[660px] pt-[7px]">
    <div class="flex h-[6px] gap-1"><i class="w-5 bg-[#e8744f]"></i><i class="w-[188px] bg-[#ec4fa6]"></i><i class="w-5 bg-[#e8744f]"></i><i class="w-[116px] bg-[#ffadb0]"></i><i class="w-5 bg-[#e8744f]"></i></div>
    <div class="mt-0.5 flex gap-2 pl-[2px]">
      <svg class="size-4"><use href="#t-box"/></svg><svg class="size-4"><use href="#t-sk"/></svg><svg class="size-4"><use href="#t-ext"/></svg><svg class="size-4"><use href="#t-ext"/></svg><svg class="size-4"><use href="#t-pat"/></svg><svg class="size-4"><use href="#t-ext"/></svg><svg class="size-4"><use href="#t-pat"/></svg><svg class="size-4"><use href="#t-ext"/></svg><svg class="size-4"><use href="#t-pat"/></svg><svg class="size-4"><use href="#t-box"/></svg><svg class="size-4"><use href="#t-sk"/></svg><svg class="size-4"><use href="#t-ext"/></svg><svg class="size-4"><use href="#t-com"/></svg><svg class="size-4"><use href="#t-ext"/></svg><svg class="size-4"><use href="#t-pat"/></svg><svg class="size-4"><use href="#t-pl"/></svg>
      <div class="flex gap-2 opacity-25"><svg class="size-4"><use href="#t-mir"/></svg><svg class="size-4"><use href="#t-com"/></svg><svg class="size-4"><use href="#t-pl"/></svg><svg class="size-4"><use href="#t-mir"/></svg><svg class="size-4"><use href="#t-box"/></svg><svg class="size-4"><use href="#t-sk"/></svg><svg class="size-4"><use href="#t-ext"/></svg><svg class="size-4"><use href="#t-com"/></svg><svg class="size-4"><use href="#t-com"/></svg><svg class="size-4"><use href="#t-com"/></svg><svg class="size-4"><use href="#t-com"/></svg></div>
    </div>
    <svg class="absolute left-0 top-[3px] h-[40px] w-[640px]" viewBox="0 0 640 40">
      <defs><pattern id="tick" x="10" width="24" height="6" y="31" patternUnits="userSpaceOnUse"><path d="M0 0h2v6H0z" fill="#c6c6c6"/></pattern></defs>
      <path d="M10 31h626v6H10z" fill="url(#tick)"/><path d="M10 36h626v2H10z" fill="#c6c6c6"/>
      <path d="M2 7l4-4M7.500 7l4-4M13 7l4-4M266 7l4-4M271.500 7l4-4M277 7l4-4" stroke="#333" stroke-width="2.300"/>
      <path d="M376 6h12v4l-5 5v23h-2V15l-5-5z" fill="#666"/>
    </svg>
  </div>
  <svg class="ml-auto mr-[13px] mt-4 size-4 text-[#888]"><use href="#gear"/></svg>
</footer>
</body>
</html>
